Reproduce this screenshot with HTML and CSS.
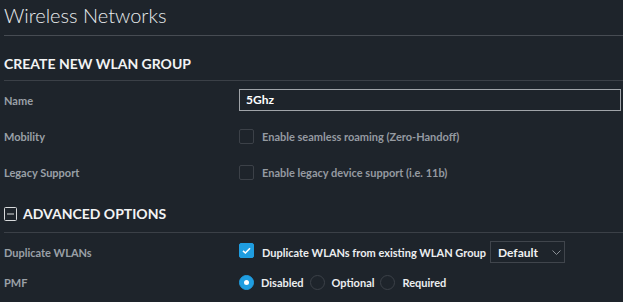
FILE: index.html
```html
<!DOCTYPE html>
<html>
<head>
<meta charset="utf-8">
<link rel="stylesheet" href="styles.css">
</head>
<body>
<div class="page">
  <h1 class="title">Wireless Networks</h1>
  <h2 class="section">CREATE NEW WLAN GROUP</h2>
  <div class="rows">
    <div class="row">
      <div class="label">Name</div>
      <div class="control"><div class="input">5Ghz</div></div>
    </div>
    <div class="row">
      <div class="label">Mobility</div>
      <div class="control"><span class="cb"></span><span class="opt dim">Enable seamless roaming (Zero-Handoff)</span></div>
    </div>
    <div class="row">
      <div class="label">Legacy Support</div>
      <div class="control"><span class="cb"></span><span class="opt dim">Enable legacy device support (i.e. 11b)</span></div>
    </div>
  </div>
  <h2 class="section adv">
    <svg class="minus" width="13" height="14" viewBox="0 0 13 14"><rect x="0.5" y="0.5" width="12" height="13" rx="1" fill="none" stroke="#d8dadc" stroke-width="1"/><line x1="3" y1="7" x2="10" y2="7" stroke="#d8dadc" stroke-width="1"/></svg>
    ADVANCED OPTIONS
  </h2>
  <div class="rows rows2">
    <div class="row">
      <div class="label">Duplicate WLANs</div>
      <div class="control">
        <span class="cb on"><svg width="15" height="15" viewBox="0 0 15 15"><path d="M4 7.8 L6.4 10 L11 5.2" fill="none" stroke="#fff" stroke-width="1.6"/></svg></span>
        <span class="opt">Duplicate WLANs from existing WLAN Group</span>
        <div class="select">Default<svg class="chev" width="9" height="5" viewBox="0 0 9 5"><path d="M0.5 0.5 L4.5 4.5 L8.5 0.5" fill="none" stroke="#8b9096" stroke-width="1"/></svg></div>
      </div>
    </div>
    <div class="row">
      <div class="label">PMF</div>
      <div class="control">
        <span class="radio on"></span><span class="opt">Disabled</span>
        <span class="radio"></span><span class="opt">Optional</span>
        <span class="radio"></span><span class="opt">Required</span>
      </div>
    </div>
  </div>
</div>
</body>
</html>
```
FILE: styles.css
```css
html, body {
  margin: 0;
  padding: 0;
  background: #1e242b;
  height: 100%;
  overflow: hidden;
}
body {
  font-family: Lato, "Open Sans", sans-serif;
  color: #e8eaec;
}
.page {
  padding-left: 4px;
}
.title {
  margin: 0;
  font-weight: 300;
  font-size: 20px;
  line-height: 24px;
  padding-top: 3px;
  color: #e9ecee;
  border-bottom: 1px solid #474c53;
  box-sizing: content-box;
  height: 32px;
}
.section {
  margin: 0;
  font-size: 14px;
  font-weight: 700;
  color: #f2f3f4;
  line-height: 18px;
  padding: 19px 0 7px;
  border-bottom: 1px solid #3b4047;
  display: flex;
  align-items: center;
}
.section.adv {
  padding: 22px 0 9px;
}
.minus {
  margin-right: 6px;
  flex: none;
}
.rows {
  display: flex;
  flex-direction: column;
  gap: 14px;
  padding-top: 8px;
}
.rows2 {
  gap: 8px;
  padding-top: 8px;
}
.row {
  display: flex;
  align-items: center;
  height: 22px;
}
.label {
  width: 235px;
  flex: none;
  font-size: 11px;
  font-weight: 700;
  color: #9aa0a7;
}
.control {
  flex: 1;
  display: flex;
  align-items: center;
  padding-right: 2px;
}
.input {
  flex: 1;
  height: 20px;
  border: 1px solid #a0a4a9;
  box-sizing: content-box;
  font-size: 12px;
  font-weight: 700;
  color: #ffffff;
  line-height: 20px;
  padding-left: 6px;
}
.cb {
  width: 13px;
  height: 13px;
  border: 1px solid #3c4148;
  border-radius: 2px;
  flex: none;
  margin-right: 8px;
  position: relative;
}
.cb.on {
  background: #1f9de0;
  border-color: #1f9de0;
  margin-top: -4px;
}
.cb.on svg {
  position: absolute;
  left: -1px;
  top: -1px;
}
.opt {
  font-size: 11px;
  font-weight: 700;
  color: #eceef0;
  margin-right: 6px;
}
.opt.dim {
  color: #959aa1;
}
.select {
  width: 66px;
  height: 20px;
  border: 1px solid #40454c;
  font-size: 12px;
  font-weight: 700;
  color: #f0f1f2;
  display: flex;
  align-items: center;
  padding-left: 7px;
  margin-left: -2px;
}
.chev {
  margin-left: 14px;
}
.radio {
  width: 13px;
  height: 13px;
  border: 1px solid #3c4148;
  border-radius: 50%;
  flex: none;
  margin-right: 7px;
  position: relative;
}
.radio.on {
  background: #1f9de0;
  border-color: #1f9de0;
}
.radio.on::after {
  content: "";
  position: absolute;
  width: 5px;
  height: 5px;
  background: #fff;
  border-radius: 50%;
  left: 4px;
  top: 4px;
}
```
